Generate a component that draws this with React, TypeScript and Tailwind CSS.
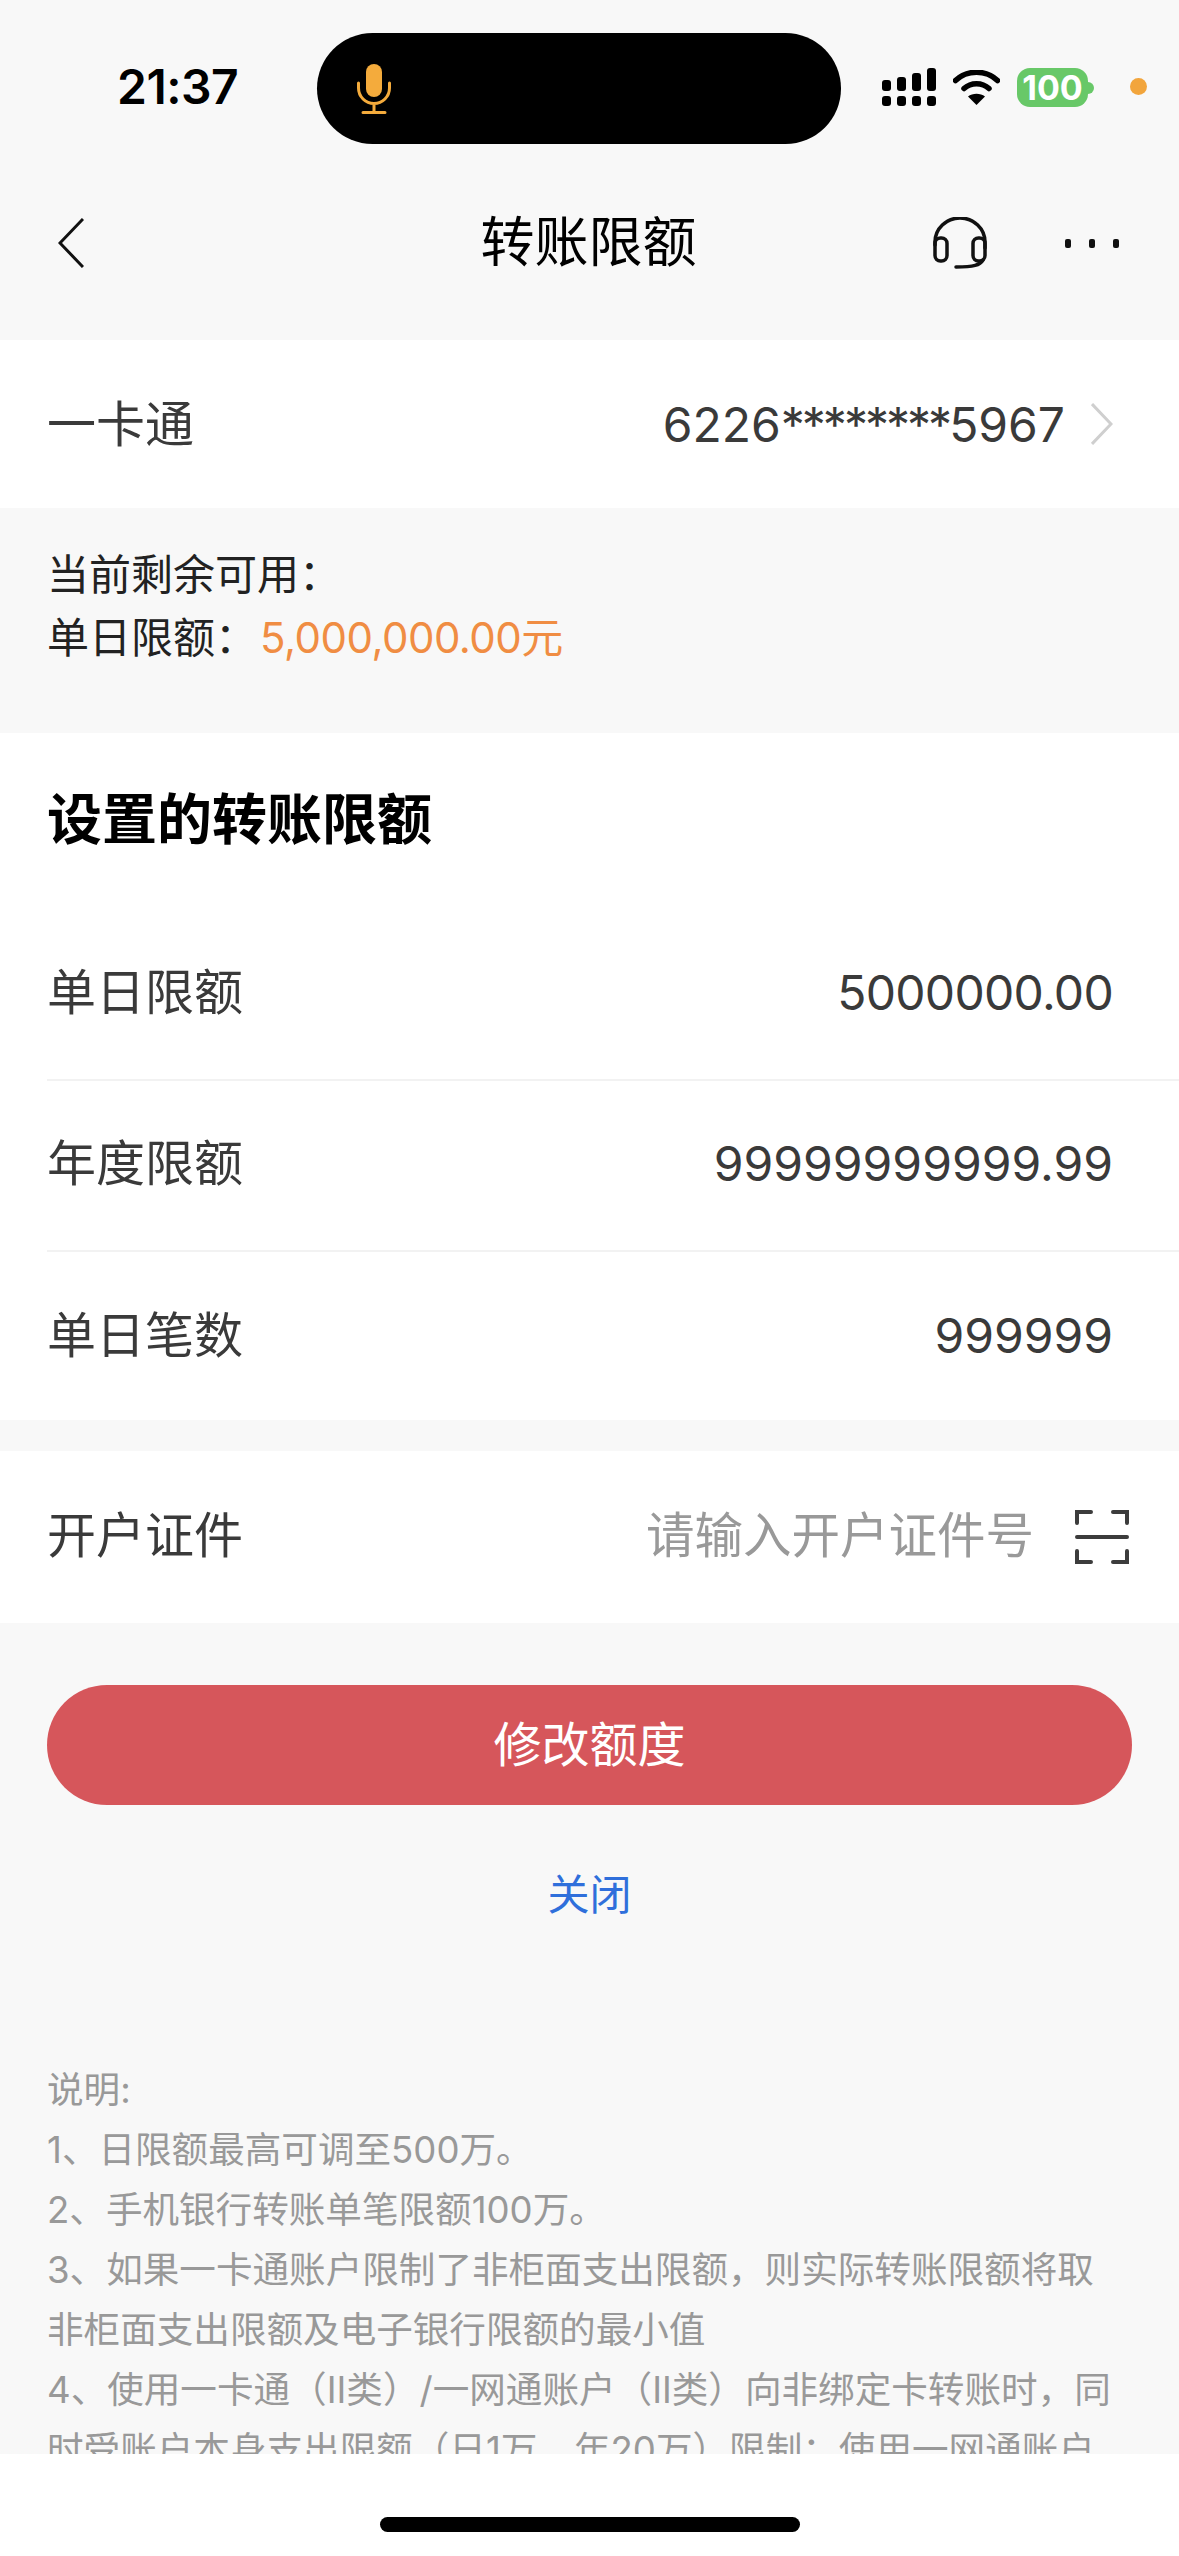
const cjk = "font-['Inter','Noto_Sans_CJK_SC',sans-serif]";

function StatusBar() {
  return (
    <div className="flex h-[184px] shrink-0 items-start">
      <div className="ml-[117px] mt-[60px] w-[200px] text-[48px] leading-[54px] font-semibold tracking-[-0.5px] text-black">21:37</div>
      <div className="mt-[33px] flex h-[111px] w-[524px] items-center rounded-full bg-black pl-[40px]">
        <svg width="34" height="50" viewBox="0 0 34 50" fill="none">
          <rect x="9" y="0" width="16" height="33" rx="8" fill="#f4ab3c" />
          <path d="M1.5 19v5a15.5 15.5 0 0 0 31 0v-5M17 40v8M6 48.5h22" stroke="#f4ab3c" strokeWidth="3" strokeLinecap="round" />
        </svg>
      </div>
      <svg className="ml-[41px] mt-[68px]" width="55" height="39" viewBox="0 0 55 39" fill="#000">
        <rect x="0" y="12" width="9" height="11" rx="3" />
        <rect x="15" y="9" width="9" height="14" rx="3" />
        <rect x="30" y="5" width="9" height="18" rx="3" />
        <rect x="45" y="0" width="9" height="23" rx="3" />
        <rect x="0" y="28" width="9" height="10" rx="3" />
        <rect x="15" y="28" width="9" height="10" rx="3" />
        <rect x="30" y="28" width="9" height="10" rx="3" />
        <rect x="45" y="28" width="9" height="10" rx="3" />
      </svg>
      <svg className="ml-[16px] mt-[70px]" width="47" height="35" viewBox="0 0 47 35" fill="none">
        <path d="M2.5 10.5C14 -0.5 33 -0.5 44.5 10.5" stroke="#000" strokeWidth="5.5" strokeLinecap="round" />
        <path d="M11 18.5C18 12 29 12 36 18.5" stroke="#000" strokeWidth="5.5" strokeLinecap="round" />
        <path d="M23.5 35L15 26.5C19.5 22.8 27.5 22.8 32 26.5Z" fill="#000" />
      </svg>
      <div className="ml-[17px] mt-[68px] flex items-center">
        <div className="flex h-[39px] w-[71px] items-center justify-center rounded-[13px] bg-[#68c868] text-[34px] leading-none font-bold text-white">100</div>
        <div className="h-[12px] w-[6px] rounded-r-full bg-[#68c868]" />
      </div>
      <div className="ml-[36px] mt-[78px] h-[17px] w-[17px] rounded-full bg-[#f2a53c]" />
    </div>
  );
}

function NavBar() {
  return (
    <div className="flex h-[116px] shrink-0 items-center pl-[58px] pr-[60px] pt-[2px]">
      <div className="flex flex-1 basis-0 items-center">
        <svg width="26" height="50" viewBox="0 0 26 50" fill="none">
          <path d="M25 1L2 25l23 24" stroke="#111" strokeWidth="3" />
        </svg>
      </div>
      <div className="text-[54px] font-normal leading-none text-black">转账限额</div>
      <div className="flex flex-1 basis-0 items-center justify-end gap-[78px]">
        <svg width="54" height="52" viewBox="0 0 54 52" fill="none" stroke="#111" strokeWidth="3.5" strokeLinecap="round">
          <path d="M2 28V25a25 24 0 0 1 50 0v6" />
          <rect x="2" y="21" width="12" height="23" rx="5.5" />
          <rect x="40" y="21" width="12" height="23" rx="5.5" />
          <path d="M50 43c-3 5-9 7-27 7" />
        </svg>
        <div className="flex gap-[18px]">
          <div className="h-[9px] w-[6px] rounded-[2px] bg-[#111]" />
          <div className="h-[9px] w-[6px] rounded-[2px] bg-[#111]" />
          <div className="h-[9px] w-[6px] rounded-[2px] bg-[#111]" />
        </div>
      </div>
    </div>
  );
}

function LimitRow({ label, value, border, tight }: { label: string; value: string; border?: boolean; tight?: boolean }) {
  return (
    <div className={border ? "ml-[47px] flex h-[171px] items-center justify-between border-b-2 border-[#f2f2f2] pb-[3px] pr-[66px]" : "ml-[47px] flex h-[168px] items-center justify-between pr-[66px]"}>
      <span className="text-[49px] text-[#3a3a3a]">{label}</span>
      <span className={tight ? "text-[48px] tracking-[-0.7px] text-[#3a3a3a]" : "text-[48px] text-[#3a3a3a]"}>{value}</span>
    </div>
  );
}

const notes = [
  "说明:",
  "1、日限额最高可调至500万。",
  "2、手机银行转账单笔限额100万。",
  "3、如果一卡通账户限制了非柜面支出限额，则实际转账限额将取非柜面支出限额及电子银行限额的最小值",
  "4、使用一卡通（II类）/一网通账户（II类）向非绑定卡转账时，同时受账户本身支出限额（日1万，年20万）限制；使用一网通账户",
];

export default function App() {
  return (
    <div className={`flex h-[2556px] w-[1179px] flex-col overflow-hidden bg-[#f8f8f8] ${cjk}`}>
      <div className="flex min-h-0 flex-1 flex-col overflow-hidden">
        <StatusBar />
        <NavBar />
        <div className="h-[40px] shrink-0" />
        <div className="flex h-[168px] shrink-0 items-center justify-between bg-white pl-[47px] pr-[66px]">
          <span className="pt-[2px] text-[49px] text-[#3a3a3a]">一卡通</span>
          <div className="flex items-center gap-[26px]">
            <span className="pt-[2px] text-[48px] text-[#3a3a3a]">
              6226<span className="tracking-[-3px]">********</span>5967
            </span>
            <svg width="22" height="42" viewBox="0 0 22 42" fill="none">
              <path d="M1 1l19 20L1 41" stroke="#cfcfcf" strokeWidth="3" />
            </svg>
          </div>
        </div>
        <div className="h-[225px] shrink-0 px-[47px] pt-[35px] text-[42px] leading-[63px] text-[#222]">
          <div>当前剩余可用：</div>
          <div>
            单日限额：<span className="ml-[3px] tracking-[-0.5px] text-[#f08d43]">5,000,000.00元</span>
          </div>
        </div>
        <div className="shrink-0 bg-white">
          <div className="flex h-[177px] items-center pb-[4px] pl-[47px] text-[55px] font-bold text-black">设置的转账限额</div>
          <LimitRow label="单日限额" value="5000000.00" border tight />
          <LimitRow label="年度限额" value="99999999999.99" border />
          <LimitRow label="单日笔数" value="999999" />
        </div>
        <div className="h-[31px] shrink-0" />
        <div className="flex h-[172px] shrink-0 items-center justify-between bg-white pl-[47px] pr-[50px]">
          <span className="pb-[2px] text-[49px] text-[#3a3a3a]">开户证件</span>
          <div className="flex items-center gap-[41px]">
            <span className="pb-[2px] text-[48.5px] text-[#999999]">请输入开户证件号</span>
            <svg width="54" height="54" viewBox="0 0 54 54" fill="none" stroke="#3c3c3c" strokeWidth="4" strokeLinecap="round">
              <path d="M2 13V2h14M38 2h14v11M2 41v11h14M38 52h14V41M2 27h50" />
            </svg>
          </div>
        </div>
        <div className="mx-[47px] mt-[62px] flex h-[120px] shrink-0 items-center justify-center rounded-full bg-[#d6565b] text-[48px] text-white">修改额度</div>
        <div className="mt-[60px] shrink-0 text-center text-[42px] leading-[60px] text-[#2f6fdb]">关闭</div>
        <div className="mt-[135px] shrink-0 pl-[47px] pr-[50px] text-[36.6px] leading-[60px] text-[#999999]">
          {notes.map((n) => (
            <div key={n}>{n}</div>
          ))}
        </div>
      </div>
      <div className="flex h-[102px] shrink-0 justify-center bg-white pt-[63px]">
        <div className="h-[15px] w-[420px] rounded-full bg-black" />
      </div>
    </div>
  );
}
